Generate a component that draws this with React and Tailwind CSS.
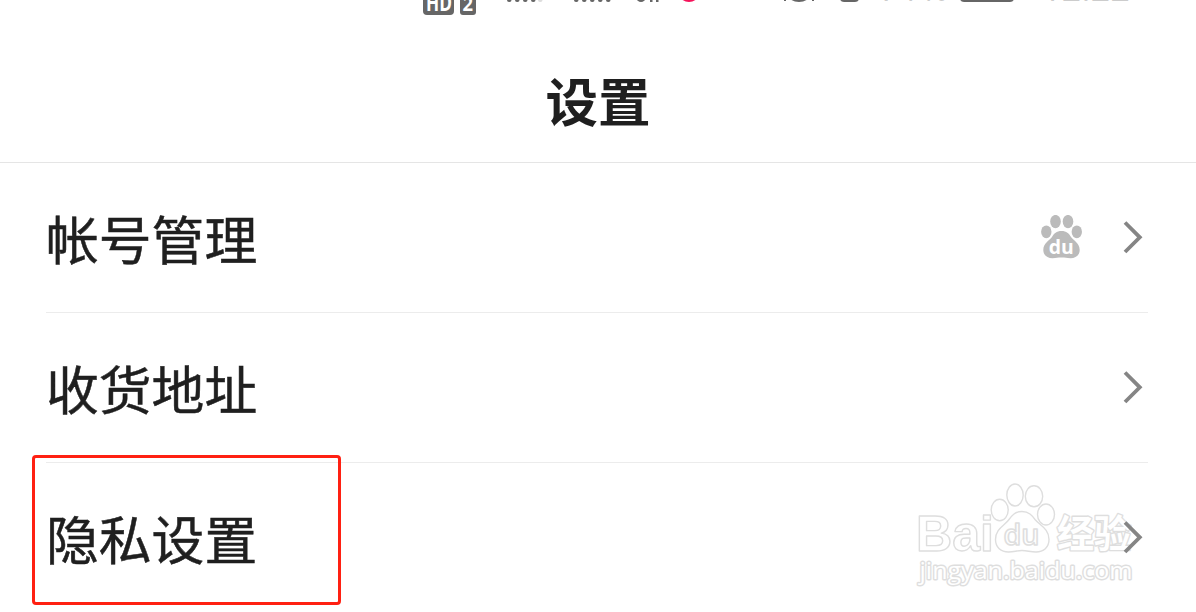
const rows = [
  { label: '帐号管理', badge: true },
  { label: '收货地址' },
  { label: '隐私设置' },
];

function Chevron() {
  return (
    <svg viewBox="0 0 20 34" className="relative z-10 h-[34px] w-[20px]" fill="none" stroke="#858585" strokeWidth="3.8">
      <path d="M2 2.500 16.800 17.300 2 32" />
    </svg>
  );
}

function Paw() {
  return (
    <svg viewBox="0 0 42 44" className="h-[44px] w-[42px]">
      <g fill="#bbb">
        <ellipse cx="5.300" cy="16.800" rx="5.200" ry="6.400" />
        <ellipse cx="14.500" cy="6.600" rx="5.300" ry="6.700" />
        <ellipse cx="27" cy="6.600" rx="5.300" ry="6.700" />
        <ellipse cx="35.800" cy="16.800" rx="5.200" ry="6.400" />
        <path d="M20.500 16c-5 0-7.500 2.500-9.500 6C8.500 25.500 2.300 28 2.300 35c0 5 3.700 8.200 9.200 8.200 4 0 5-.6 9-.6s5 .6 9 .6c5.500 0 9.200-3.200 9.200-8.200 0-7-6.200-9.500-8.700-13-2-3.500-4.500-6-9.500-6Z" />
      </g>
      <text x="7.800" y="38.500" textLength="25" lengthAdjust="spacingAndGlyphs" fill="#fff" fontSize="20" fontWeight="700" fontFamily="Open Sans, sans-serif">
        du
      </text>
    </svg>
  );
}

// only the lower edge of the phone's status bar is on screen
function StatusBar() {
  return (
    <div className="h-[16px] overflow-hidden">
      <svg viewBox="0 0 1196 16" className="h-[16px] w-[1196px]" fontFamily="Open Sans, sans-serif">
        <rect x="423" y="-15" width="31" height="30" rx="4" fill="#666" />
        <rect x="460" y="-15" width="16" height="30" rx="3" fill="#666" />
        <text x="426" y="11" fill="#fff" fontSize="23" fontWeight="700" textLength="26" lengthAdjust="spacingAndGlyphs">HD</text>
        <text x="462.500" y="11" fill="#fff" fontSize="20" fontWeight="700" textLength="10.500" lengthAdjust="spacingAndGlyphs">2</text>
        <g fill="#666">
          {[507, 515, 523, 531, 574, 582, 590, 598, 606].map(x => (
            <rect key={x} x={x} y="-10" width="4.500" height="12" rx="2" />
          ))}
          <rect x="538" y="-10" width="4.500" height="12" rx="2" fill="#ddd" />
          <ellipse cx="641" cy="-2" rx="4.500" ry="4" />
          <path d="M650-5h2.500v7H650zM656-5h2.500v7H656z" />
          <ellipse cx="799" cy="-7" rx="12" ry="9" />
          <rect x="784" y="-5" width="2" height="6" />
          <rect x="812" y="-5" width="2" height="6" />
          <rect x="840" y="-16" width="19" height="18" rx="4" />
          <rect x="960" y="-18" width="54" height="20" rx="4" />
        </g>
        <circle cx="689" cy="-9" r="11" fill="#f5135a" />
        <g fill="#ccc">
          <text x="880" y="1" fontSize="32" textLength="68">71%</text>
          <text x="1042" y="1" fontSize="34" textLength="88">12:22</text>
        </g>
      </svg>
    </div>
  );
}

function Watermark() {
  return (
    <svg
      viewBox="910 480 240 110"
      className="pointer-events-none absolute top-[480px] left-[910px] h-[110px] w-[240px]"
      fill="none"
      stroke="#dedede"
      strokeWidth="1.400"
      strokeLinejoin="round"
      fontFamily="Open Sans, sans-serif"
    >
      <text x="916" y="551" fontSize="49.500" fontWeight="700" textLength="78" lengthAdjust="spacingAndGlyphs" fontFamily="Liberation Sans, sans-serif">Bai</text>
      <ellipse cx="999.700" cy="510" rx="8.500" ry="10.700" />
      <ellipse cx="1015" cy="495" rx="8.200" ry="11" />
      <ellipse cx="1034" cy="496.300" rx="8.700" ry="10.500" />
      <ellipse cx="1046" cy="514.500" rx="8.500" ry="10.500" />
      <path d="M1022 511.500c-7 0-10 4-13 8-4 6-13.500 9-13.500 20 0 8 5.500 12.500 13 12.500 6 0 8-1.500 13.500-1.500s8 1.500 14 1.500c7.500 0 13-4.500 13-12.500 0-11-9-14-14-20-3-4-6-8-13-8Z" />
      <text x="1003.500" y="545" fontSize="28.500" fontWeight="600" textLength="36" lengthAdjust="spacingAndGlyphs" strokeWidth="1.600">du</text>
      <g fill="#fff" strokeWidth="2.800" paintOrder="stroke">
        <text x="1057" y="547" fontSize="38" fontWeight="700" textLength="74" lengthAdjust="spacingAndGlyphs" fontFamily="Noto Sans CJK SC, sans-serif">经验</text>
        <text x="919.500" y="579" fontSize="24" fontWeight="400" textLength="213" lengthAdjust="spacingAndGlyphs">jingyan.baidu.com</text>
      </g>
    </svg>
  );
}

export default function App() {
  return (
    <div className="relative h-[612px] w-[1196px] overflow-hidden bg-white font-['Noto_Sans_CJK_SC',sans-serif] text-[#1f1f1f]">
      <header className="h-[163px] border-b border-[#e5e5e5]">
        <StatusBar />
        <h1 className="pt-[45px] text-center text-[52.500px] leading-[76px] font-bold">设置</h1>
      </header>

      <ul className="pr-[48px] pl-[46px]">
        {rows.map(row => (
          <li key={row.label} className="flex h-[150px] items-center justify-between border-b border-[#ececec] pr-[5px] pb-[2px] last:border-b-0">
            <span className="text-[52.800px] leading-[76px] [-webkit-text-stroke:0.5px_#1f1f1f]">{row.label}</span>
            <span className="flex items-center gap-[40px]">
              {row.badge && <Paw />}
              <Chevron />
            </span>
          </li>
        ))}
      </ul>

      <Watermark />

      {/* highlight around the privacy row */}
      <div className="absolute top-[455px] left-[32px] h-[150px] w-[309px] rounded-[4px] border-3 border-[#ff2012]" />
    </div>
  );
}
